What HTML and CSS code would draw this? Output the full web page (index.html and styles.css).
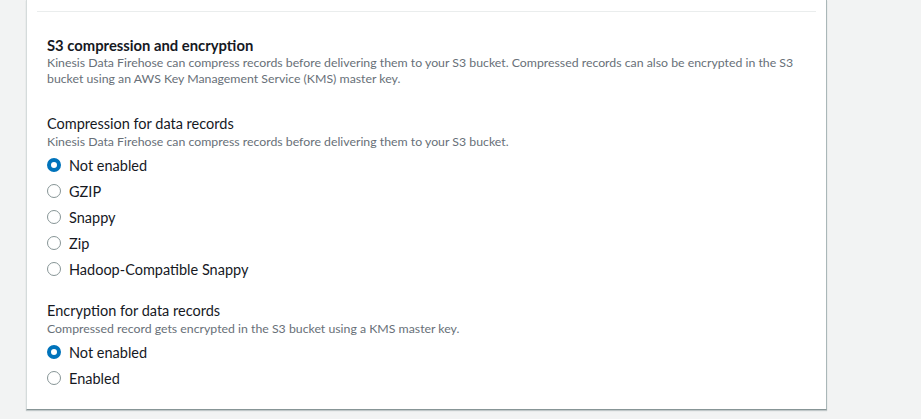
FILE: index.html
```html
<!DOCTYPE html>
<html lang="en">
<head>
<meta charset="utf-8">
<link rel="stylesheet" href="styles.css">
</head>
<body>
<div class="page">
  <div class="card">
    <div class="prev"></div>
    <div class="sep"></div>
    <section class="section">
      <h2 class="title">S3 compression and encryption</h2>
      <p class="desc">Kinesis Data Firehose can compress records before delivering them to your S3 bucket. Compressed records can also be encrypted in the S3 bucket using an AWS Key Management Service (KMS) master key.</p>

      <div class="field field-first">
        <div class="label">Compression for data records</div>
        <div class="hint">Kinesis Data Firehose can compress records before delivering them to your S3 bucket.</div>
        <div class="radios">
          <label class="radio"><span class="dot checked"></span><span class="rtext">Not enabled</span></label>
          <label class="radio"><span class="dot"></span><span class="rtext">GZIP</span></label>
          <label class="radio"><span class="dot"></span><span class="rtext">Snappy</span></label>
          <label class="radio"><span class="dot"></span><span class="rtext">Zip</span></label>
          <label class="radio"><span class="dot"></span><span class="rtext">Hadoop-Compatible Snappy</span></label>
        </div>
      </div>

      <div class="field field-second">
        <div class="label">Encryption for data records</div>
        <div class="hint">Compressed record gets encrypted in the S3 bucket using a KMS master key.</div>
        <div class="radios">
          <label class="radio"><span class="dot checked"></span><span class="rtext">Not enabled</span></label>
          <label class="radio"><span class="dot"></span><span class="rtext">Enabled</span></label>
        </div>
      </div>
    </section>
  </div>
</div>
</body>
</html>
```

FILE: styles.css
```css
html, body {
  margin: 0;
  padding: 0;
  background: #f2f3f3;
  font-family: "Lato", "Open Sans", sans-serif;
  color: #16191f;
}
.page {
  width: 921px;
  height: 419px;
  padding: 0 94px 0 26px;
  box-sizing: border-box;
}
.card {
  width: 801px;
  height: 410px;
  background: #fff;
  box-sizing: border-box;
  border-left: 1px solid #d5dbdb;
  border-right: 1px solid #aab7b8;
  border-bottom: 1px solid #879596;
  box-shadow: 0 1px 1px 0 rgba(0, 28, 36, 0.2);
}
.prev {
  height: 11px;
}
.sep {
  height: 1px;
  margin: 0 10px;
  background: #eaeded;
}
.section {
  padding: 23px 20px 0 20px;
}
.title {
  margin: 0;
  font-size: 14.8px;
  line-height: 20px;
  font-weight: 700;
}
.desc {
  margin: 0;
  font-size: 12.3px;
  line-height: 16px;
  color: #687078;
}
.field-first {
  margin-top: 27px;
}
.field-second {
  margin-top: 19px;
}
.label {
  font-size: 14.5px;
  line-height: 20px;
}
.hint {
  font-size: 12.3px;
  line-height: 16px;
  color: #687078;
}
.radios {
  margin-top: 2px;
  display: flex;
  flex-direction: column;
}
.radio {
  display: flex;
  align-items: center;
  height: 26px;
  gap: 8px;
  font-size: 14.5px;
}
.dot {
  width: 14px;
  height: 14px;
  box-sizing: border-box;
  border-radius: 50%;
  border: 1px solid #879596;
  background: #fff;
}
.dot.checked {
  border: 4px solid #0073bb;
}
```
